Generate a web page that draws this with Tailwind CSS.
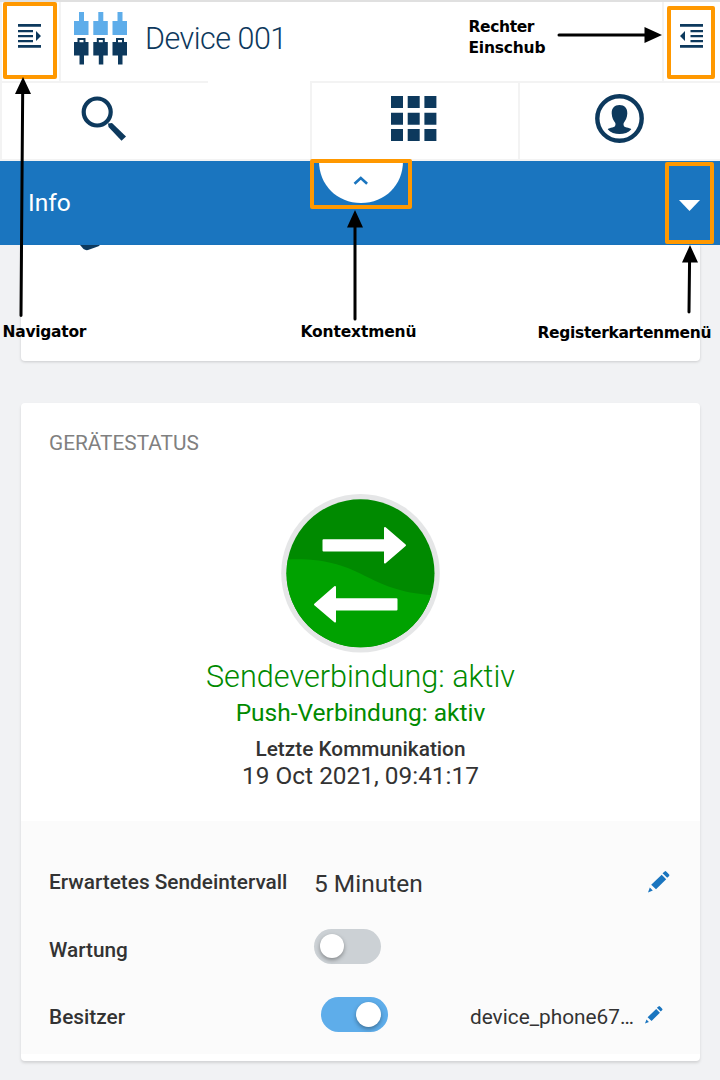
<!DOCTYPE html>
<html lang="de">
<head>
<meta charset="utf-8">
<title>Device 001</title>
<script src="https://cdn.jsdelivr.net/npm/@tailwindcss/browser@4"></script>
</head>
<body class="relative w-[720px] h-[1080px] overflow-hidden bg-[#f1f2f4] font-['Roboto',sans-serif] text-[#333333] whitespace-nowrap">
<header class="bg-white border-t-2 border-[#e0e0e0]">
  <div class="flex h-[79px]">
    <div class="w-[61px] shrink-0 border-x-2 border-[#f3f3f3] flex items-start pl-[16px] pt-[22px]">
      <svg width="24" height="24" viewBox="0 0 24 24" fill="#0d395d"><path d="M0 0h23v2.700H0zM0 6h15v2.300H0zM0 11h15v2.300H0zM0 16h15v2.300H0zM0 21h23v2.700H0zM18 7l5 5-5 5z"/></svg>
    </div>
    <div class="flex grow pl-[13px] pt-[10px]">
      <svg width="54" height="53" viewBox="0 0 54 53">
        <path fill="#5eadea" d="M5 0h5v9h4.500v14H0V9h5zM24.300 0h5v9h4.500v14H19.300V9h5zM43.500 0h5v9H53v14H38.500V9h5z"/>
        <path fill="#0d395d" fill-rule="evenodd" d="M3.500 26h8v4h3v13.500H10v9H5.500v-9H0V30h3.500zM5.500 28v2.200h4V28zM22.800 26h8v4h3v13.500h-4.500v9h-4.500v-9h-5.500V30h3.500zM24.800 28v2.200h4V28zM42 26h8v4h3v13.500h-4.500v9H44v-9h-5.500V30H42zM44 28v2.200h4V28z"/>
      </svg>
      <h1 class="ml-[17px] mt-[9px] text-[30.500px] leading-[36px] tracking-[-0.500px] font-light text-[#0d395d]">Device 001</h1>
    </div>
    <div class="w-[58px] shrink-0 border-l-2 border-[#f3f3f3] pl-[16px] pt-[22px]">
      <svg width="24" height="24" viewBox="0 0 24 24" fill="#0d395d"><path d="M0 0h23v2.700H0zM10.500 6H23v2.300H10.500zM10.500 11H23v2.300H10.500zM10.500 16H23v2.300H10.500zM0 21h23v2.700H0zM5 7v10L0 12z"/></svg>
    </div>
  </div>
  <nav class="flex h-[80px] border-b-2 border-[#f3f3f3]">
    <div class="w-[208px] border-t-2 border-l-2 border-[#f3f3f3] pl-[79px] pt-[13px]">
      <svg width="46" height="46" viewBox="0 0 46 46"><circle cx="16.200" cy="16" r="13.500" fill="none" stroke="#0d395d" stroke-width="4.200"/><path fill="#0d395d" d="M27 27.500l4-.5 14 13.500-4.500 4.200L27.500 31z"/></svg>
    </div>
    <div class="w-[102px]"></div>
    <div class="w-[208px] border-t-2 border-l-2 border-[#f3f3f3] pl-[79px] pt-[13px]">
      <svg width="46" height="46" viewBox="0 0 46 46" fill="#0d395d"><path d="M0 0h12v12H0zM16.700 0h12v12h-12zM33.400 0h12v12h-12zM0 16.700h12v12H0zM16.700 16.700h12v12h-12zM33.400 16.700h12v12h-12zM0 33h12v12H0zM16.700 33h12v12h-12zM33.400 33h12v12h-12z"/></svg>
    </div>
    <div class="w-[202px] border-t-2 border-l-2 border-[#f3f3f3] pl-[75px] pt-[11px]">
      <svg width="49" height="49" viewBox="0 0 49 49" fill="#0d395d"><circle cx="24.500" cy="24.500" r="22.200" fill="none" stroke="#0d395d" stroke-width="4.400"/><path d="M24.500 11c5 0 8 3 7.800 8.500-.2 4.500-1.800 7-3.600 9.500-.7 3 .8 4 3 4.600 2 .5 3.300.7 4.600 1.600C33.500 38.500 29 40 24.500 40S15.500 38.500 12.700 35.200c1.300-.9 2.600-1.100 4.600-1.600 2.200-.6 3.700-1.600 3-4.600-1.800-2.500-3.400-5-3.600-9.500C16.500 14 19.500 11 24.500 11z"/></svg>
    </div>
  </nav>
</header>
<div class="flex h-[84px] bg-[#1a75bf] text-white">
  <span class="w-[311px] pl-[28px] pt-[27px] text-[24.500px] leading-[30px]">Info</span>
  <svg width="100" height="50" viewBox="0 0 100 50"><path fill="#fff" d="M8 0H92C92 24 74 42 50 42S8 24 8 0z"/><path d="M43.500 22.800l6.300-5.800 6.300 5.800" fill="none" stroke="#1a75bf" stroke-width="2.600"/></svg>
  <svg class="ml-auto mr-[20px] mt-[39px]" width="21" height="11" viewBox="0 0 21 11"><path fill="#fff" d="M0 0h21L10.500 11z"/></svg>
</div>
<main class="pl-[21px] pr-[20px]">
  <section class="h-[116px] bg-white rounded-b-[4px] shadow-[0_1px_3px_rgba(0,0,0,0.16)]">
    <svg class="ml-[59px]" width="20" height="6" viewBox="0 0 20 6"><path fill="#0d395d" d="M0 0h20L18.500 1.300 8 5Q5.500 5.500 3.500 4z"/></svg>
  </section>
  <section class="mt-[42px] h-[658px] bg-white rounded-[4px] shadow-[0_2px_3px_rgba(0,0,0,0.13)] pt-[28px] flex flex-col">
    <h2 class="pl-[28px] text-[20.800px] leading-[24px] text-[#808080]">GERÄTESTATUS</h2>
    <div class="mt-[38px] flex flex-col items-center">
      <svg width="160" height="160" viewBox="0 0 160 160">
        <clipPath id="disc"><circle cx="79.500" cy="80.300" r="74"/></clipPath>
        <circle cx="79.500" cy="80.300" r="79.300" fill="#e5e6e7"/><circle cx="79.500" cy="80.300" r="74" fill="#008a00"/>
        <path clip-path="url(#disc)" fill="#00a200" d="M0 67L6.800 66.500C83.500 64 81.500 98 152.100 102.300L160 102V160H0z"/>
        <path fill="#fff" stroke="#fff" stroke-width="2" stroke-linejoin="round" d="M42.500 47.200H104V35L124 52.200 104 69.500V57.500H42.500zM115.500 106.200H54V94L34 111.500 54 128.500V116.500H115.500z"/>
      </svg>
      <p class="mt-[6px] text-[30.600px] leading-[36px] font-light text-[#008a00]">Sendeverbindung: aktiv</p>
      <p class="mt-[4px] text-[24.500px] leading-[28px] text-[#008a00]">Push-Verbindung: aktiv</p>
      <p class="mt-[8px] text-[20.800px] leading-[28px] font-medium">Letzte Kommunikation</p>
      <p class="text-[24.400px] leading-[26px]">19 Oct 2021, 09:41:17</p>
    </div>
    <div class="mt-[32px] h-[233px] bg-[#fbfbfb] pl-[28px] pt-[27px] flex flex-col">
      <div class="flex h-[68px] items-center">
        <span class="w-[265px] text-[20.800px] leading-[28px] font-medium">Erwartetes Sendeintervall</span>
        <span class="grow mt-[3px] text-[24.500px] leading-[28px]">5 Minuten</span>
        <svg class="mr-[30px]" width="22" height="22" viewBox="0 0 22 22" fill="#1a75bf"><path d="M17.300 0Q18 0 21.500 4 21.500 5 19.200 6.700L14.500 2.200zM13.700 3.700l4.500 4.500L8 18.300 3.200 13.700zM1.800 16.500l3 3L0 21.500z"/></svg>
      </div>
      <div class="flex h-[66px] items-center">
        <span class="w-[265px] mt-[2px] text-[20.800px] leading-[28px] font-medium">Wartung</span>
        <div class="-mt-[6px] w-[67px] h-[35px] rounded-full bg-[#ccd1d5] flex items-center pl-[6px]"><div class="size-[24px] rounded-full bg-white shadow-[0_2px_4px_rgba(0,0,0,0.35)]"></div></div>
      </div>
      <div class="flex h-[68px] items-center">
        <span class="w-[272px] mt-[2px] text-[20.800px] leading-[28px] font-medium">Besitzer</span>
        <div class="-mt-[4px] w-[67px] h-[35px] rounded-full bg-[#5eadea] flex items-center pl-[35px]"><div class="size-[25px] rounded-full bg-white shadow-[0_2px_4px_rgba(0,0,0,0.35)]"></div></div>
        <span class="ml-[82px] mt-[2px] w-[165px] text-[20.800px] leading-[28px]">device_phone67…</span>
        <svg class="ml-[10px] -mt-[2px]" width="18" height="18" viewBox="0 0 22 22" fill="#1a75bf"><path d="M17.300 0Q18 0 21.500 4 21.500 5 19.200 6.700L14.500 2.200zM13.700 3.700l4.500 4.500L8 18.300 3.200 13.700zM1.800 16.500l3 3L0 21.500z"/></svg>
      </div>
    </div>
  </section>
</main>
<!-- callouts over the interface -->
<svg class="absolute inset-0" width="720" height="1080" viewBox="0 0 720 1080">
  <g fill="none" stroke="#ff9800" stroke-width="4" stroke-linejoin="round">
    <rect x="5" y="4" width="50" height="73"/><rect x="669" y="8" width="44" height="69"/><rect x="312" y="161" width="98" height="46"/><rect x="667" y="164" width="45" height="78"/>
  </g>
  <g stroke="#000" stroke-width="3" stroke-linecap="round"><path d="M22.700 90L21 315.500M559 35H650M355 222V319M689.600 258L689 312"/></g>
  <path d="M23 77l8 17H15zM662 35l-17.500 8V27zM355 210l8 17.500h-16zM690 245l8 17.500h-16z"/>
  <g font-family="'DejaVu Sans',sans-serif" font-weight="700" font-size="15.500">
    <text x="468.500" y="32" textLength="66">Rechter</text><text x="468.500" y="53" textLength="77">Einschub</text>
    <text x="2.500" y="337" textLength="84">Navigator</text><text x="300.500" y="337" textLength="116">Kontextmenü</text><text x="537.500" y="338" textLength="174">Registerkartenmenü</text>
  </g>
</svg>
</body>
</html>
